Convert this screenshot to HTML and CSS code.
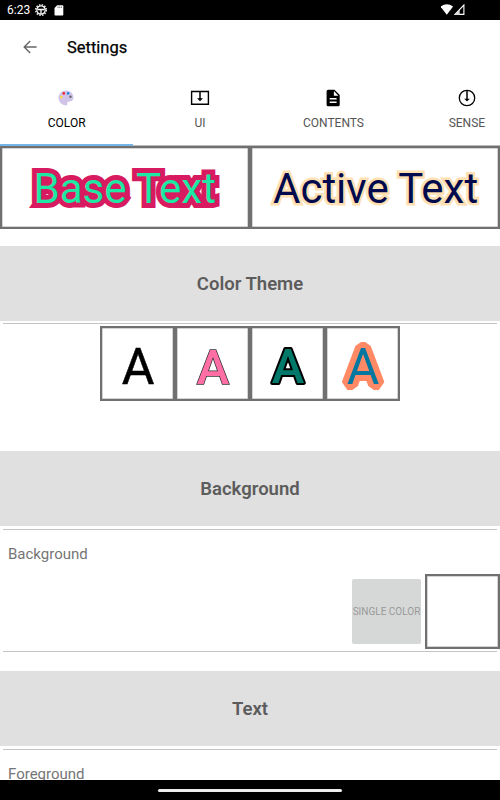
FILE: index.html
```html
<!DOCTYPE html>
<html lang="en">
<head>
  <meta charset="UTF-8">
  <meta name="viewport" content="width=device-width, initial-scale=1.0">
  <title>Settings</title>
  <link rel="stylesheet" href="styles.css">
</head>
<body>
  <div class="screen">
    <div class="statusbar">
      <span class="clock">6:23</span>
      <svg class="status-gear" width="14" height="14" viewBox="0 0 14 14">
        <circle cx="7" cy="7" r="5.3" fill="none" stroke="#ddd" stroke-width="1.600" stroke-dasharray="1.500 1.275"/>
        <circle cx="7" cy="7" r="4.200" fill="none" stroke="#fff" stroke-width="1.200"/>
        <path d="M3.500 6.500h7M7 6.500v4.500" stroke="#fff" stroke-width="1.300"/>
      </svg>
      <svg class="status-card" width="10" height="11" viewBox="0 0 10 11">
        <path d="M3.200.3H8.500q.8 0 .8.8V9.700q0 .8-.8.8H1.300q-.8 0-.8-.8V3z" fill="#fff"/>
        <path d="M4 1.500v1.500M5.700 1.500v1.500M7.400 1.500v1.500" stroke="#555" stroke-width=".8"/>
      </svg>
      <span class="spacer"></span>
      <svg width="26" height="12" viewBox="0 0 26 12">
        <path d="M-.5 2.500Q5.800-2 12.100 2.500L5.800 10.800z" fill="#fff"/>
        <path d="M14 10.400L22.900 1V10.400z" fill="none" stroke="#fff" stroke-width="1.100"/>
        <path d="M13.500 11L18.700 5.500V11z" fill="#ddd"/>
      </svg>
    </div>

    <div class="toolbar">
      <svg width="14" height="14" viewBox="0 0 14 14">
        <path d="M13.600 7H1.500M7.200 1L1.200 7l6 6" fill="none" stroke="#666" stroke-width="1.400"/>
      </svg>
      <h1>Settings</h1>
    </div>

    <div class="tabs">
      <div class="tab active">
        <svg width="20" height="20" viewBox="0 0 20 20">
          <path d="M10 2.500C5.800 2.500 2.500 5.700 2.500 9.800C2.500 14 6 17.500 10.300 17.500C11.700 17.500 11.300 16.400 11.200 15.500C11 14 12 13.300 13.500 13.400C16 13.500 17.500 12 17.500 9.500C17.500 5.500 14.200 2.500 10 2.500z" fill="#d1c4e9"/>
          <circle cx="7.800" cy="5.400" r="1.300" fill="#f32030"/>
          <circle cx="12.100" cy="5.400" r="1.300" fill="#1e88e5"/>
          <circle cx="5.300" cy="9" r="1.300" fill="#fdd835"/>
          <circle cx="14.500" cy="8.700" r="1.200" fill="#666"/>
        </svg>
        <span>COLOR</span>
      </div>
      <div class="tab">
        <svg width="20" height="20" viewBox="0 0 20 20">
          <path d="M1.600 3.500h16.800v12.800H1.600z" fill="none" stroke="#000" stroke-width="1.400"/>
          <path d="M10 4v7" stroke="#000" stroke-width="1.500"/>
          <path d="M7 10.300h6L10 13.300z"/>
        </svg>
        <span>UI</span>
      </div>
      <div class="tab">
        <svg width="20" height="20" viewBox="0 0 20 20">
          <path d="M5.200 1.700h6.300L16.700 7v9.700q0 1.600-1.600 1.600H5.200q-1.600 0-1.600-1.600V3.300q0-1.600 1.600-1.600z"/>
          <path d="M10.900 3v4.700h4.500z" fill="#fff"/>
          <path d="M6.700 10.800h6.900M6.700 14.200h6.900" stroke="#fff" stroke-width="1.500"/>
        </svg>
        <span>CONTENTS</span>
      </div>
      <div class="tab">
        <svg width="20" height="20" viewBox="0 0 20 20">
          <circle cx="10" cy="10" r="7.700" fill="none" stroke="#000" stroke-width="1.300"/>
          <path d="M10 3v8" stroke="#000" stroke-width="1.500"/>
          <path d="M7.200 10.800h5.600L10 13.500z"/>
        </svg>
        <span>SENSE</span>
      </div>
    </div>

    <div class="previews">
      <div class="frame preview">
        <svg width="245" height="78" viewBox="0 0 245 78">
          <text class="sample base" x="30.500" y="55">Base Text</text>
        </svg>
      </div>
      <div class="frame preview">
        <svg width="245" height="78" viewBox="0 0 245 78">
          <text class="sample current" x="20" y="55">Active Text</text>
        </svg>
      </div>
    </div>

    <h2 class="first">Color Theme</h2>
    <div class="divider"></div>
    <div class="themes">
      <div class="frame theme"><svg width="70" height="70"><text class="letter plain" x="35" y="54.500">A</text></svg></div>
      <div class="frame theme"><svg width="70" height="70"><text class="letter pink" x="35" y="54.500">A</text></svg></div>
      <div class="frame theme"><svg width="70" height="70"><text class="letter green" x="35" y="54">A</text></svg></div>
      <div class="frame theme"><svg width="70" height="70"><text class="letter orange" x="35" y="54.500">A</text></svg></div>
    </div>

    <h2>Background</h2>
    <div class="divider"></div>
    <div class="setting">
      <p>Background</p>
      <div class="controls">
        <button>SINGLE COLOR</button>
        <div class="frame swatch"></div>
      </div>
    </div>
    <div class="divider"></div>

    <h2 class="next">Text</h2>
    <div class="divider"></div>
    <div class="setting">
      <p>Foreground</p>
    </div>

    <div class="navbar"><div class="handle"></div></div>
  </div>
</body>
</html>
```

FILE: styles.css
```css
* {
  box-sizing: border-box;
}
body {
  margin: 0;
  background: #fff;
  font-family: Roboto, sans-serif;
  color: #000;
}
svg {
  display: block;
  flex: none;
}
.screen {
  position: relative;
  width: 500px;
  height: 800px;
  overflow: hidden;
}
.statusbar {
  display: flex;
  align-items: center;
  height: 20px;
  padding: 0 33.5px 0 7px;
  background: #000;
  color: #fff;
}
.clock {
  width: 27px;
  font-size: 12px;
  line-height: 21px;
}
.status-card {
  margin-left: 6px;
}
.spacer {
  flex: 1;
}
.toolbar {
  display: flex;
  align-items: center;
  gap: 30px;
  height: 55px;
  padding: 0 23px;
}
h1 {
  margin: 0;
  font-size: 16.5px;
  font-weight: 400;
  line-height: 19px;
  -webkit-text-stroke: .25px #000;
}
.toolbar svg {
  margin-top: -1px;
}
.tabs {
  display: flex;
  height: 70.5px;
  border-bottom: 1px solid #bbb;
}
.tab {
  display: flex;
  flex: 0 0 133.4px;
  flex-direction: column;
  align-items: center;
  gap: 8px;
  height: 70.5px;
  padding-top: 13px;
  border-bottom: 2px solid transparent;
  color: #555;
  font-size: 12px;
  line-height: 15px;
}
.tab.active {
  color: #000;
  border-bottom-color: #76b5e8;
}
.tab.active svg {
  margin-right: 1px;
}
.previews, .themes {
  display: flex;
}
.frame {
  border: 2px solid #707070;
  background: #fff;
  box-shadow: inset 0 0 0 .5px #aaa;
}
.preview {
  width: 250px;
  height: 83px;
  padding: .5px;
}
.sample {
  font-size: 42px;
  paint-order: stroke;
}
.base {
  fill: #1de9a4;
  stroke: #d81b60;
  stroke-width: 10px;
}
.current {
  fill: #000a4d;
  stroke: #ffe0b2;
  stroke-width: 5px;
}
h2 {
  height: 75px;
  margin: 16px 0 3px;
  background: #e0e0e0;
  color: #5c5c5c;
  font-size: 18.5px;
  font-weight: 600;
  line-height: 77px;
  text-align: center;
}
.first {
  margin: 17px 0 2.5px;
}
.divider {
  height: 1px;
  margin: 0 3px;
  background: #c4c4c4;
}
.themes {
  justify-content: center;
  margin-top: 2px;
  margin-bottom: 50px;
}
.theme {
  width: 75px;
  height: 75px;
  padding: .5px;
}
.letter {
  font-size: 50px;
  text-anchor: middle;
}
.plain {
  stroke: #000;
  stroke-width: .5px;
}
.pink {
  fill: #ff6fa5;
  font-size: 49px;
  font-weight: 500;
  stroke: #333;
  stroke-width: 1.5px;
  paint-order: stroke;
}
.green {
  fill: #00796b;
  font-size: 49px;
  font-weight: 500;
  stroke: #000;
  stroke-width: 4px;
  stroke-linejoin: round;
  paint-order: stroke;
}
.orange {
  fill: #0277a0;
  stroke: #ff8a65;
  stroke-width: 12px;
  stroke-linejoin: bevel;
  paint-order: stroke;
}
.setting {
  padding-top: 14px;
}
.setting p {
  margin: 0 8px;
  color: #757575;
  font-size: 15px;
  line-height: 20px;
}
.controls {
  display: flex;
  justify-content: flex-end;
  align-items: center;
  gap: 4px;
  margin: 10px 0 2px;
}
button {
  width: 69px;
  height: 65px;
  padding: 0;
  border: 0;
  border-radius: 2px;
  background: #d6d8d7;
  color: #999;
  font-family: inherit;
  font-size: 10px;
  line-height: 12px;
  white-space: nowrap;
}
.swatch {
  width: 75px;
  height: 75px;
}
.next {
  margin-top: 19px;
}
.navbar {
  position: absolute;
  left: 0;
  bottom: 0;
  display: flex;
  align-items: center;
  justify-content: center;
  width: 100%;
  height: 20px;
  background: #000;
}
.handle {
  width: 184px;
  height: 3px;
  border-radius: 2px;
  background: #eee;
}
```
